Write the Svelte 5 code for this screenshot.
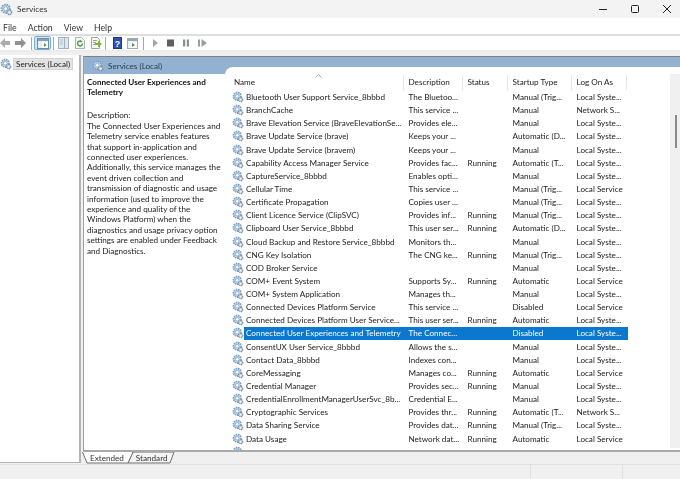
<script>
  /**
   * Services console: tree on the left, description pane and service table on the right.
   */
  const rows = [
    ['Bluetooth User Support Service_8bbbd', 'The Bluetoo...', '', 'Manual (Trig...', 'Local Syste...'],
    ['BranchCache', 'This service ...', '', 'Manual', 'Network S...'],
    ['Brave Elevation Service (BraveElevationSe...', 'Provides ele...', '', 'Manual', 'Local Syste...'],
    ['Brave Update Service (brave)', 'Keeps your ...', '', 'Automatic (D...', 'Local Syste...'],
    ['Brave Update Service (bravem)', 'Keeps your ...', '', 'Manual', 'Local Syste...'],
    ['Capability Access Manager Service', 'Provides fac...', 'Running', 'Automatic (T...', 'Local Syste...'],
    ['CaptureService_8bbbd', 'Enables opti...', '', 'Manual', 'Local Syste...'],
    ['Cellular Time', 'This service ...', '', 'Manual (Trig...', 'Local Service'],
    ['Certificate Propagation', 'Copies user ...', '', 'Manual (Trig...', 'Local Syste...'],
    ['Client Licence Service (ClipSVC)', 'Provides inf...', 'Running', 'Manual (Trig...', 'Local Syste...'],
    ['Clipboard User Service_8bbbd', 'This user ser...', 'Running', 'Automatic (D...', 'Local Syste...'],
    ['Cloud Backup and Restore Service_8bbbd', 'Monitors th...', '', 'Manual', 'Local Syste...'],
    ['CNG Key Isolation', 'The CNG ke...', 'Running', 'Manual (Trig...', 'Local Syste...'],
    ['COD Broker Service', '', '', 'Manual', 'Local Syste...'],
    ['COM+ Event System', 'Supports Sy...', 'Running', 'Automatic', 'Local Service'],
    ['COM+ System Application', 'Manages th...', '', 'Manual', 'Local Syste...'],
    ['Connected Devices Platform Service', 'This service ...', '', 'Disabled', 'Local Service'],
    ['Connected Devices Platform User Service...', 'This user ser...', 'Running', 'Automatic', 'Local Syste...'],
    ['Connected User Experiences and Telemetry', 'The Connec...', '', 'Disabled', 'Local Syste...'],
    ['ConsentUX User Service_8bbbd', 'Allows the s...', '', 'Manual', 'Local Syste...'],
    ['Contact Data_8bbbd', 'Indexes con...', '', 'Manual', 'Local Syste...'],
    ['CoreMessaging', 'Manages co...', 'Running', 'Automatic', 'Local Service'],
    ['Credential Manager', 'Provides sec...', 'Running', 'Manual', 'Local Syste...'],
    ['CredentialEnrollmentManagerUserSvc_8b...', 'Credential E...', '', 'Manual', 'Local Syste...'],
    ['Cryptographic Services', 'Provides thr...', 'Running', 'Automatic (T...', 'Network S...'],
    ['Data Sharing Service', 'Provides dat...', 'Running', 'Manual (Trig...', 'Local Syste...'],
    ['Data Usage', 'Network dat...', 'Running', 'Automatic', 'Local Service'],
    ['', '', '', '', ''],
  ];
  const selected = 18;
</script>

{#snippet gear(size)}
  <svg class="gear" width={size} height={size} viewBox="0 0 16 16">
    <circle cx="7" cy="7" r="5" fill="#cfe0f0" stroke="#7aa0c6" stroke-width="2.4" stroke-dasharray="2 1" />
    <circle cx="7" cy="7" r="2.4" fill="#fff" stroke="#6f94b8" stroke-width="0.9" />
    <circle cx="11.5" cy="11.5" r="2.9" fill="#c4d2df" stroke="#74879a" stroke-width="1.4" stroke-dasharray="1.4 0.8" />
    <circle cx="11.5" cy="11.5" r="1" fill="#fff" />
  </svg>
{/snippet}

<div class="window">
  <header class="titlebar">
    {@render gear(13)}
    <span class="title">Services</span>
    <div class="caption">
      <svg width="12" height="12" viewBox="0 0 12 12"><path d="M2 6.5h8" stroke="#222" fill="none" /></svg>
      <svg width="12" height="12" viewBox="0 0 12 12"><rect x="2.5" y="2.5" width="7" height="7" rx="1" stroke="#222" fill="none" /></svg>
      <svg width="12" height="12" viewBox="0 0 12 12"><path d="M2 2l8 8M10 2l-8 8" stroke="#222" fill="none" /></svg>
    </div>
  </header>

  <nav class="menubar">
    <span>File</span><span>Action</span><span>View</span><span>Help</span>
  </nav>

  <div class="toolbar">
    <svg width="26" height="12" viewBox="0 0 26 12">
      <path d="M0 6l5-5v3h5v4H5v3z" fill="#a9abad" />
      <path d="M26 6l-5-5v3h-6v4h6v3z" fill="#909294" />
    </svg>
    <i class="sep s1"></i>
    <div class="tool">
      <svg width="12" height="11" viewBox="0 0 12 11">
        <rect x="0.5" y="0.5" width="11" height="10" fill="#e9eef2" stroke="#7c8a96" />
        <path d="M1 1h10v2H1z" fill="#8aa0b3" />
        <path d="M5 4h6v6H5z" fill="#fff" />
        <path d="M7 5l2.5 2L7 9z" fill="#3d9a46" />
      </svg>
    </div>
    <i class="sep s2"></i>
    <svg class="i1" width="11" height="12" viewBox="0 0 11 12">
      <rect x="0.5" y="0.5" width="10" height="11" fill="#dfe7ee" stroke="#a3afba" />
      <path d="M6.5 1v10" stroke="#a3afba" />
      <path d="M2 3h3M2 5h3M2 7h3" stroke="#b5c1cb" />
    </svg>
    <svg class="i2" width="10" height="12" viewBox="0 0 10 12">
      <path d="M0.5 0.5h6l3 3v8h-9z" fill="#f4f7f4" stroke="#a8b2b8" />
      <path d="M7.4 6.6a2.4 2.4 0 1 1-1-2" fill="none" stroke="#3f9d45" stroke-width="1.4" />
      <path d="M5.4 2.8l2 1.6-2.2 1z" fill="#3f9d45" />
    </svg>
    <svg class="i2" width="11" height="12" viewBox="0 0 11 12">
      <path d="M0.5 0.5h6l2 2v9h-8z" fill="#f8f8ee" stroke="#a3a78e" />
      <path d="M2 3.5h4M2 5.5h3M2 7.5h3" stroke="#9a9f88" />
      <path d="M4 6h3V3.8L11 7l-4 3.2V8H4z" fill="#72b83a" />
    </svg>
    <i class="sep s3"></i>
    <svg class="i3" width="9" height="12" viewBox="0 0 9 12">
      <rect x="0.5" y="0.5" width="8" height="11" fill="#2f52b0" stroke="#1d3a87" />
      <text x="4.5" y="9.5" class="help">?</text>
    </svg>
    <svg class="i4" width="11" height="11" viewBox="0 0 11 11">
      <rect x="0.5" y="0.5" width="10" height="10" fill="#eef1f3" stroke="#a0abb4" />
      <path d="M1 1h9v2H1z" fill="#98a8b5" />
      <path d="M3.5 4h6v6h-6z" fill="#fff" />
      <path d="M5 5l3 2-3 2z" fill="#3d9a46" />
    </svg>
    <i class="sep s4"></i>
    <svg class="media" width="56" height="10" viewBox="0 0 56 10">
      <path d="M0 1l5 4-5 4z" fill="#a4a7aa" />
      <rect x="14" y="1.5" width="7" height="7" fill="#5d5f61" />
      <path d="M30 1.5h2.2v7H30zM33.8 1.5H36v7h-2.2z" fill="#8b8e90" />
      <path d="M45 1.5h2v7h-2zM48.5 1l5.5 4-5.5 4z" fill="#9a9da0" />
    </svg>
  </div>

  <div class="main">
    <aside class="tree">
      <div class="tree-item">
        {@render gear(12)}
        <span class="tree-label">Services (Local)</span>
      </div>
    </aside>

    <section class="panel">
      <div class="panel-frame">
        <div class="panel-head">
          {@render gear(12)}
          <span>Services (Local)</span>
        </div>
        <div class="panel-body">
          <div class="details">
            <h2>Connected User Experiences and Telemetry</h2>
            <p>Description:<br />The Connected User Experiences and Telemetry service enables features that support in-application and connected user experiences. Additionally, this service manages the event driven collection and transmission of diagnostic and usage information (used to improve the experience and quality of the Windows Platform) when the diagnostics and usage privacy option settings are enabled under Feedback and Diagnostics.</p>
          </div>

          <div class="list">
            <span class="sort">
              <svg width="7" height="4" viewBox="0 0 7 4"><path d="M0.5 3.5l3-3 3 3" fill="none" stroke="#a9a9a9" /></svg>
            </span>
            <div class="row head">
              <span>Name</span><span>Description</span><span>Status</span><span>Startup Type</span><span>Log On As</span>
            </div>
            <div class="tbody">
              {#each rows as row, i}
                <div class="line">
                  {@render gear(12)}
                  <div class="row" class:selected={i === selected}>
                    {#each row as cell}<span>{cell}</span>{/each}
                  </div>
                </div>
              {/each}
            </div>
            <div class="scrollbar"><div class="thumb"></div></div>
          </div>
        </div>
      </div>
      <div class="tabs">
        <svg class="tab-shape" width="96" height="12" viewBox="0 0 96 12">
          <path d="M51 0l-5 11h42l4-11z" fill="#f4f4f4" stroke="#6f6f6f" />
          <path d="M0.5 0l4.500 11H46l5-11z" fill="#fff" stroke="#6f6f6f" />
          <path d="M1 0.500h49" stroke="#fff" />
        </svg>
        <span class="tab first">Extended</span>
        <span class="tab">Standard</span>
      </div>
    </section>
  </div>

  <footer class="statusbar">
    <i></i><i></i>
  </footer>
</div>

<style>
  :global(body) {
    margin: 0;
    background: #fff;
  }

  .window {
    width: 680px;
    height: 479px;
    display: flex;
    flex-direction: column;
    overflow: hidden;
    font-family: "Lato", "Open Sans", sans-serif;
    font-size: 8.15px;
    color: #222;
    background: #fff;
    filter: blur(0.25px);
  }

  .titlebar {
    height: 18px;
    display: flex;
    align-items: center;
    gap: 4px;
    background: #f3f3f3;
    flex-shrink: 0;
  }

  .title {
    font-size: 8.4px;
    color: #333;
  }

  .caption {
    margin-left: auto;
    display: flex;
    gap: 20px;
    padding-right: 7px;
  }

  .menubar {
    height: 16px;
    padding-top: 2px;
    box-sizing: border-box;
    display: flex;
    align-items: center;
    gap: 11px;
    padding-left: 3px;
    font-size: 8.7px;
    color: #333;
    background: #fff;
    flex-shrink: 0;
  }

  .toolbar {
    height: 14px;
    display: flex;
    align-items: center;
    border-top: 2px solid #dedede;
    border-bottom: 2px solid #ececec;
    background: #fff;
    flex-shrink: 0;
  }

  .sep {
    width: 1px;
    height: 13px;
    background: #a9a9a9;
  }

  .s1 { margin-left: 5px; }
  .s2 { margin-left: 2px; }
  .s3 { margin-left: 3px; }
  .s4 { margin-left: 5px; }
  .i1 { margin-left: 4px; }
  .i2 { margin-left: 6px; }
  .i3 { margin-left: 7px; }
  .i4 { margin-left: 5px; }

  .tool {
    width: 17px;
    height: 14px;
    margin-left: 2px;
    display: flex;
    align-items: center;
    justify-content: center;
    background: #cfe5f5;
    border: 1px solid #6fb1de;
    border-radius: 2px;
    box-sizing: border-box;
  }

  .media {
    margin-left: 9px;
  }

  .help {
    font-family: "Liberation Sans", sans-serif;
    font-size: 9px;
    font-weight: 700;
    fill: #fff;
    text-anchor: middle;
  }

  .main {
    flex: 1;
    min-height: 0;
    display: flex;
    background: #f0f0f0;
  }

  .tree {
    width: 79px;
    margin: 3px 0 1px;
    background: #fff;
    padding-top: 3px;
    flex-shrink: 0;
    border-right: 2px solid #b4b4b4;
    border-bottom: 1px solid #b4b4b4;
  }

  .tree-item {
    display: flex;
    align-items: center;
    gap: 1px;
    height: 11px;
  }

  .tree-label {
    padding: 0 2px;
    background: #e3e3e3;
    border: 1px solid #d3d3d3;
    line-height: 10px;
    white-space: nowrap;
  }

  .panel {
    flex: 1;
    min-width: 0;
    padding-left: 2px;
    display: flex;
    flex-direction: column;
  }

  .panel-frame {
    flex: 1;
    min-height: 0;
    display: flex;
    flex-direction: column;
    margin-top: 4px;
    border-top: 1px solid #808080;
    border-left: 1px solid #a0a0a0;
    border-bottom: 2px solid #a9a9a9;
    background: #fff;
  }

  .panel-head {
    height: 17px;
    display: flex;
    align-items: center;
    gap: 4px;
    padding-left: 8px;
    background: #93b1d1;
    color: #2b3d52;
    flex-shrink: 0;
  }

  .panel-body {
    flex: 1;
    min-height: 0;
    display: flex;
    background: #fff;
  }

  .details {
    width: 141px;
    padding: 3px 0 0 3px;
    box-sizing: border-box;
    flex-shrink: 0;
  }

  .details h2 {
    margin: 0 0 12.5px;
    font-size: 8.15px;
    font-weight: 700;
    color: #111;
    line-height: 10.4px;
  }

  .details p {
    margin: 0;
    line-height: 10.4px;
  }

  /* the list pane rides up into the blue header with a rounded corner */
  .list {
    flex: 1;
    min-width: 0;
    position: relative;
    overflow: hidden;
    margin-top: -7px;
    padding: 8px 0 0 7px;
    background: #fff;
    border-top-left-radius: 8px;
  }

  .sort {
    position: absolute;
    left: 90px;
    top: 7px;
    line-height: 0;
  }

  .row {
    display: grid;
    grid-template-columns: 160px 59px 45px 64px 56px;
    align-items: center;
    white-space: nowrap;
    width: 384px;
    flex: none;
  }

  .row span {
    overflow: hidden;
    padding-left: 4.500px;
  }

  .row span:first-child {
    padding-left: 2px;
  }

  .row.head {
    height: 15px;
    margin-bottom: 0.4px;
    grid-template-columns: 172px 59px 45px 64px 55px;
    width: 395px;
  }

  .row.head span {
    border-right: 1px solid #e5e5e5;
    height: 15px;
    line-height: 14px;
    box-sizing: border-box;
  }

  .line {
    display: flex;
    align-items: center;
    height: 13.15px;
  }

  .line .row {
    height: 13.15px;
  }

  .row.selected {
    background: #0a78cf;
    color: #fff;
  }

  .gear {
    flex-shrink: 0;
  }

  .scrollbar {
    position: absolute;
    right: 0;
    top: 7px;
    bottom: 2px;
    width: 10px;
    background: #f0f0f0;
  }

  .thumb {
    position: absolute;
    right: 3px;
    top: 41px;
    width: 2px;
    height: 33px;
    background: #8a8a8a;
  }

  .tabs {
    position: relative;
    height: 12px;
    display: flex;
    flex-shrink: 0;
    padding-left: 7px;
    gap: 12px;
  }

  .tab-shape {
    position: absolute;
    left: -1px;
    top: 0;
  }

  .tab {
    position: relative;
    line-height: 12px;
    color: #333;
  }

  .statusbar {
    height: 15px;
    box-sizing: border-box;
    display: flex;
    justify-content: flex-end;
    gap: 91px;
    padding-right: 57px;
    border-top: 1px solid #e2e2e2;
    background: #f0f0f0;
    flex-shrink: 0;
  }

  .statusbar i {
    width: 1px;
    background: #e0e0e0;
  }
</style>
